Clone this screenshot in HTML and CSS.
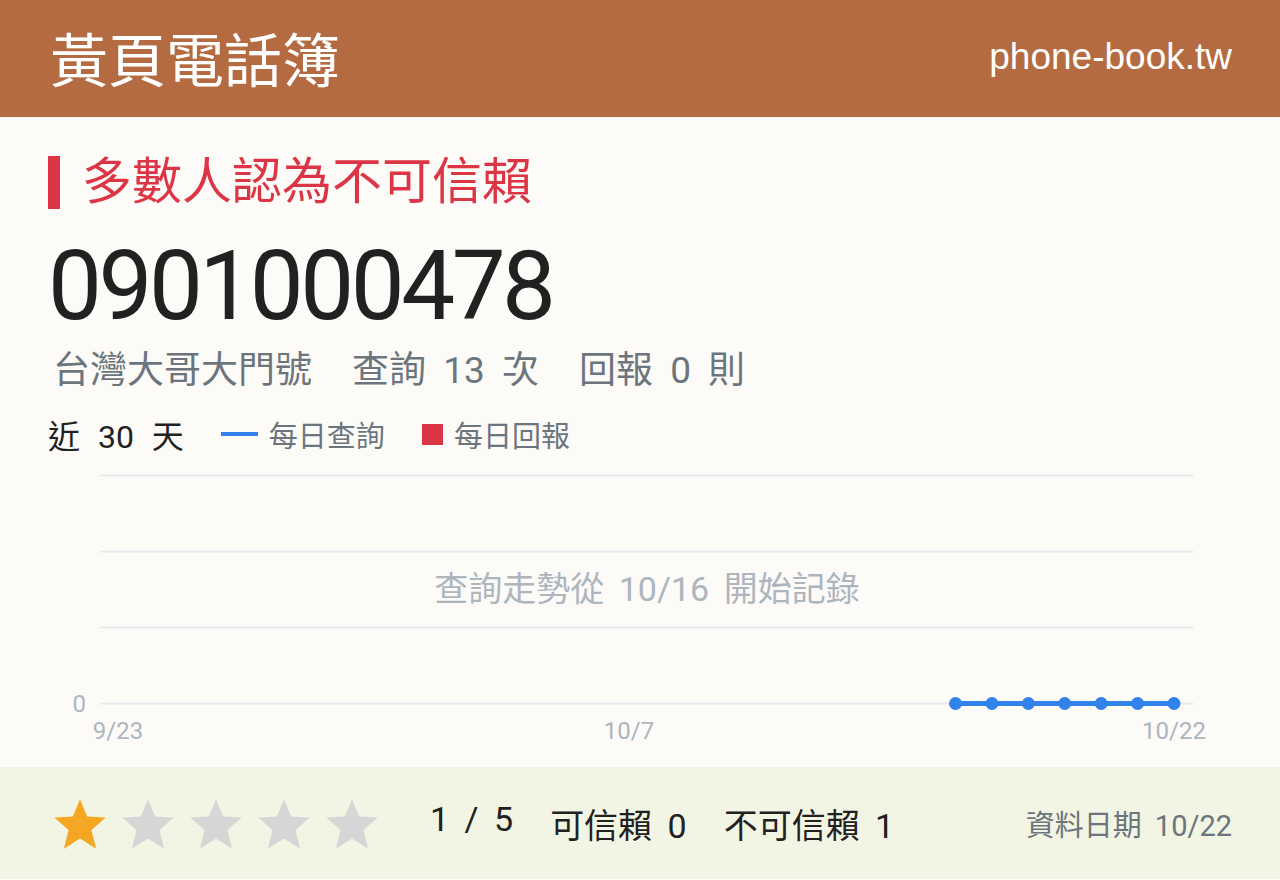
FILE: index.html
```html
<!doctype html>
<html lang="zh-Hant">
  <head>
    <meta charset="UTF-8" />
    <title>0901000478 | 黃頁電話簿</title>
    <link rel="stylesheet" href="styles.css">
  </head>
  <body>
    <header class="topbar">
      <h1 class="brand">黃頁電話簿</h1>
      <span class="site">phone-book.tw</span>
    </header>

    <main class="card">
      <h2 class="verdict">多數人認為不可信賴</h2>
      <p class="number">0901000478</p>
      <p class="meta">
        <span>台灣大哥大門號</span>
        <span>查詢 13 次</span>
        <span>回報 0 則</span>
      </p>

      <div class="legend">
        <span class="range">近 30 天</span>
        <span class="key"><i class="swatch swatch-line"></i>每日查詢</span>
        <span class="key"><i class="swatch swatch-box"></i>每日回報</span>
      </div>

      <svg class="chart" width="1184" height="302" viewBox="48 466 1184 302">
        <g class="grid">
          <line x1="100" y1="476.5" x2="1193" y2="476.5" />
          <line x1="100" y1="552.5" x2="1193" y2="552.5" />
          <line x1="100" y1="628.5" x2="1193" y2="628.5" />
          <line x1="100" y1="704.5" x2="1193" y2="704.5" />
        </g>
        <text class="axis" x="86" y="713" text-anchor="end">0</text>
        <text class="axis" x="118" y="740" text-anchor="middle">9/23</text>
        <text class="axis" x="629" y="740" text-anchor="middle">10/7</text>
        <text class="axis" x="1174" y="740" text-anchor="middle">10/22</text>
        <text class="note" x="647" y="602" text-anchor="middle">查詢走勢從 10/16 開始記錄</text>
        <g id="series"></g>
      </svg>
    </main>

    <footer class="rating">
      <div class="stars">
        <svg class="star on" viewBox="0 0 24 24"><path d="M12 1.5l3.1 7.3 7.9.4-6.1 5.4 2 8L12 18.2 5.1 22.6l2-8L1 9.2l7.9-.4z" /></svg>
        <svg class="star" viewBox="0 0 24 24"><path d="M12 1.5l3.1 7.3 7.9.4-6.1 5.4 2 8L12 18.2 5.1 22.6l2-8L1 9.2l7.9-.4z" /></svg>
        <svg class="star" viewBox="0 0 24 24"><path d="M12 1.5l3.1 7.3 7.9.4-6.1 5.4 2 8L12 18.2 5.1 22.6l2-8L1 9.2l7.9-.4z" /></svg>
        <svg class="star" viewBox="0 0 24 24"><path d="M12 1.5l3.1 7.3 7.9.4-6.1 5.4 2 8L12 18.2 5.1 22.6l2-8L1 9.2l7.9-.4z" /></svg>
        <svg class="star" viewBox="0 0 24 24"><path d="M12 1.5l3.1 7.3 7.9.4-6.1 5.4 2 8L12 18.2 5.1 22.6l2-8L1 9.2l7.9-.4z" /></svg>
      </div>
      <p class="score">
        <span>1 / 5</span>
        <span>可信賴 0</span>
        <span>不可信賴 1</span>
      </p>
      <span class="updated">資料日期 10/22</span>
    </footer>

    <script>
      // daily lookups, 9/23 .. 10/22; recording started on 10/16
      const days = 30;
      const firstRecorded = 23;
      const x0 = 118;
      const step = (1174 - x0) / (days - 1);
      const baseY = 704.5;

      const series = document.getElementById("series");
      const ns = "http://www.w3.org/2000/svg";

      const points = [];
      for (let i = firstRecorded; i < days; i++) {
        points.push([x0 + i * step, baseY]);
      }

      const line = document.createElementNS(ns, "polyline");
      line.setAttribute("points", points.map((p) => p.join(",")).join(" "));
      line.setAttribute("class", "series-line");
      series.appendChild(line);

      points.forEach(([x, y]) => {
        const dot = document.createElementNS(ns, "circle");
        dot.setAttribute("cx", x);
        dot.setAttribute("cy", y);
        dot.setAttribute("r", 6.5);
        dot.setAttribute("class", "series-dot");
        series.appendChild(dot);
      });
    </script>
  </body>
</html>
```

FILE: styles.css
```css
* {
  margin: 0;
  padding: 0;
  box-sizing: border-box;
}

body {
  background: #fcfbf8;
  font-family: Roboto, "Noto Sans CJK TC", sans-serif;
  color: #212121;
}

.topbar {
  display: flex;
  align-items: center;
  justify-content: space-between;
  height: 117px;
  padding: 0 48px 4px 50px;
  background: #b56b41;
  color: #fff;
}

.brand {
  font-family: "Noto Sans CJK TC", sans-serif;
  font-size: 58px;
  font-weight: 400;
  line-height: 1;
}

.site {
  font-family: "Liberation Sans", Arial, sans-serif;
  font-size: 37px;
}

.card {
  padding: 0 48px;
}

.verdict {
  margin-top: 39px;
  height: 53px;
  padding-left: 22px;
  border-left: 12px solid #dc3545;
  color: #dc3545;
  font-size: 50px;
  font-weight: 400;
  line-height: 53px;
}

.number {
  margin-top: 29px;
  font-size: 96px;
  line-height: 96px;
  letter-spacing: -3.5px;
  color: #212121;
}

.meta {
  display: flex;
  gap: 40px;
  margin-top: 14px;
  padding-left: 5px;
  font-size: 37px;
  line-height: 46px;
  word-spacing: 8px;
  color: #6c757d;
}

.legend {
  display: flex;
  align-items: center;
  margin-top: 18px;
  height: 44px;
}

.range {
  margin-right: 37px;
  font-size: 32px;
  word-spacing: 10px;
  color: #212121;
}

.key {
  display: flex;
  align-items: center;
  gap: 11px;
  margin-right: 37px;
  font-size: 29px;
  color: #6c757d;
}

.swatch {
  display: block;
}

.swatch-line {
  width: 37px;
  height: 4px;
  background: #3182eb;
}

.swatch-box {
  width: 21px;
  height: 21px;
  background: #dc3545;
}

.chart {
  display: block;
  margin-top: 9px;
}

.grid line {
  stroke: #e7e9ee;
  stroke-width: 2;
}

.axis {
  font-size: 24px;
  fill: #adb5bd;
}

.note {
  font-size: 34px;
  word-spacing: 6px;
  fill: #adb5bd;
}

.series-line {
  fill: none;
  stroke: #3182eb;
  stroke-width: 5;
}

.series-dot {
  fill: #3182eb;
}

.rating {
  display: flex;
  align-items: center;
  height: 112px;
  padding: 0 48px 0 52px;
  background: #f2f5e3;
}

.stars {
  display: flex;
  gap: 12px;
  margin-top: 2px;
}

.star {
  width: 56px;
  height: 56px;
  fill: #d6d6d6;
}

.star.on {
  fill: #f5a623;
}

.score {
  display: flex;
  gap: 37px;
  margin-left: 50px;
  font-size: 34px;
  word-spacing: 7px;
  color: #212121;
}

.updated {
  margin-left: auto;
  font-size: 29px;
  word-spacing: 6px;
  color: #6c757d;
}
```
